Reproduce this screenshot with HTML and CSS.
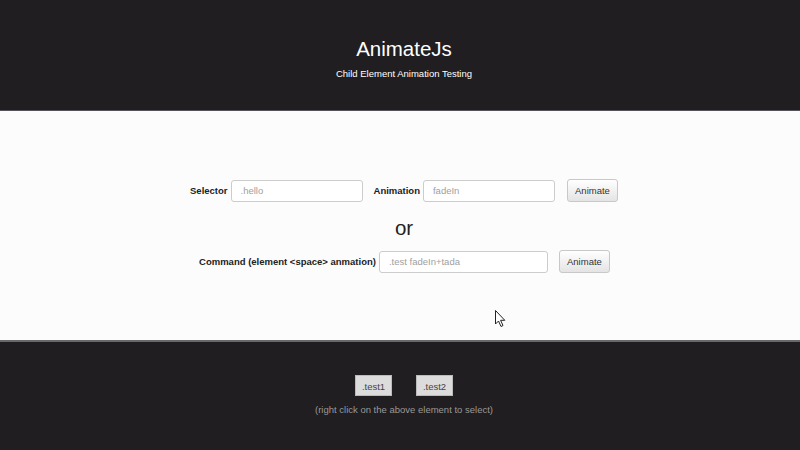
FILE: index.html
```html
<!DOCTYPE html>
<html>
<head>
<meta charset="utf-8">
<link rel="stylesheet" href="styles.css">
</head>
<body>
<header class="top">
  <h1 class="title">AnimateJs</h1>
  <p class="subtitle">Child Element Animation Testing</p>
</header>
<main class="main">
  <div class="row row-one">
    <label class="lbl">Selector</label>
    <input class="field f-sel" placeholder=".hello">
    <label class="lbl lbl-anim">Animation</label>
    <input class="field f-sel" placeholder="fadeIn">
    <button class="btn btn-one">Animate</button>
  </div>
  <div class="or">or</div>
  <div class="row row-two">
    <label class="lbl">Command (element &lt;space&gt; anmation)</label>
    <input class="field f-cmd" placeholder=".test fadeIn+tada">
    <button class="btn btn-two">Animate</button>
  </div>
  <svg class="cursor" width="12" height="18" viewBox="0 0 12 18"><path d="M0.5 0.5 L0.5 14 L3.5 11 L6 16.5 L8 15.5 L5.6 10.3 L9.8 10.3 Z" fill="#fff" stroke="#222" stroke-width="1"/></svg>
</main>
<footer class="bottom">
  <div class="tests">
    <span class="test">.test1</span>
    <span class="test">.test2</span>
  </div>
  <p class="hint">(right click on the above element to select)</p>
</footer>
</body>
</html>
```
FILE: styles.css
```css
html, body { margin: 0; padding: 0; }
body {
  font-family: "Liberation Sans", Arial, sans-serif;
  background: #fdfcfd;
  width: 800px;
  height: 450px;
  overflow: hidden;
}
.top {
  height: 111px;
  background: #201e20;
  border-bottom: 1px solid #55535a;
  color: #fff;
  text-align: center;
  box-sizing: border-box;
  padding: 37px 0 0 8px;
}
.title {
  margin: 0;
  font-weight: normal;
  font-size: 20.5px;
  line-height: 23px;
}
.subtitle {
  margin: 8px 0 0;
  font-size: 9.5px;
  line-height: 12px;
}
.main {
  position: relative;
  height: 229px;
  background: #fdfcfd;
  box-sizing: border-box;
  padding: 68px 0 0 8px;
}
.row {
  display: flex;
  align-items: center;
  justify-content: center;
}
.lbl {
  font-size: 9.5px;
  font-weight: bold;
  color: #222;
  margin-right: 3px;
}
.lbl-anim { margin-left: 11px; }
.field {
  height: 22px;
  box-sizing: border-box;
  border: 1px solid #cccccc;
  border-radius: 3px;
  background: #fff;
  padding: 0 9px;
  font-family: "Liberation Sans", Arial, sans-serif;
  font-size: 9.5px;
  color: #555;
}
.field::placeholder { color: #a0a0a0; }
.f-sel { width: 132px; }
.f-cmd { width: 169px; }
.btn {
  height: 23px;
  box-sizing: border-box;
  border: 1px solid #c8c8c8;
  border-radius: 3px;
  background: linear-gradient(#ffffff, #e4e4e4);
  font-family: "Liberation Sans", Arial, sans-serif;
  font-size: 9.5px;
  color: #333;
  padding: 0;
}
.btn-one { margin-left: 12px; width: 51px; }
.btn-two { margin-left: 11px; width: 51px; }
.or {
  text-align: center;
  font-size: 20.5px;
  line-height: 26px;
  color: #222;
  margin: 13px 0 0 0;
}
.row-two { margin-top: 9px; padding-left: 1px; }
.cursor {
  position: absolute;
  left: 495px;
  top: 199px;
}
.bottom {
  height: 110px;
  background: #201e20;
  border-top: 2px solid #6a686c;
  box-sizing: border-box;
  text-align: center;
  padding: 33px 0 0 8px;
}
.tests {
  display: flex;
  justify-content: center;
  gap: 24px;
}
.test {
  display: inline-block;
  width: 37px;
  height: 21px;
  line-height: 21px;
  box-sizing: border-box;
  background: #dcdcdc;
  border: 1px solid #bbb;
  font-size: 9.5px;
  color: #444;
}
.hint {
  margin: 8px 0 0;
  font-size: 9.5px;
  color: #999;
}
```
